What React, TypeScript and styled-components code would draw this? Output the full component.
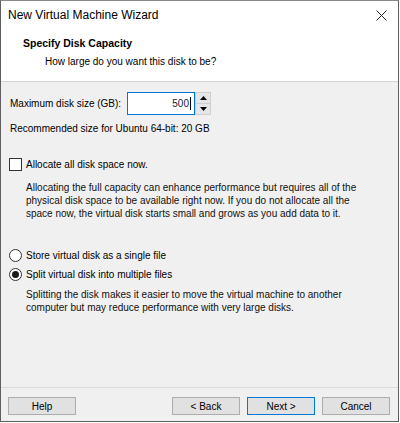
import React from "react";
import styled, { createGlobalStyle } from "styled-components";

const Global = createGlobalStyle`
  html, body { margin: 0; padding: 0; background: #ffffff; }
  body { font-family: "Liberation Sans", Arial, sans-serif; }
`;

const Window = styled.div`
  width: 399px;
  height: 422px;
  box-sizing: border-box;
  border: 1px solid #5f5f5f;
  border-top-color: #8a8a8a;
  display: flex;
  flex-direction: column;
  background: #f0f0f0;
  color: #000;
  font-size: 10px;
  line-height: 13px;
`;

const TitleBar = styled.div`
  height: 29px;
  background: #fff;
  display: flex;
  align-items: center;
  justify-content: space-between;
  padding-left: 7px;
  padding-right: 11px;
`;

const TitleText = styled.span`
  font-size: 12px;
  color: #000;
`;

const Header = styled.div`
  background: #fff;
  padding: 7px 0 13px 0;
  border-bottom: 1px solid #d4d4d4;
  display: flex;
  flex-direction: column;
  gap: 5px;
`;

const HeaderTitle = styled.div`
  font-weight: bold;
  font-size: 10.5px;
  padding-left: 22px;
`;

const HeaderSub = styled.div`
  padding-left: 44px;
`;

const Body = styled.div`
  flex: 1;
  padding: 10px 8px 0 8px;
  display: flex;
  flex-direction: column;
`;

const SizeRow = styled.div`
  display: flex;
  align-items: center;
  height: 23px;
`;

const SizeLabel = styled.span`
  width: 117px;
  padding-left: 1px;
`;

const Input = styled.div`
  width: 63px;
  height: 21px;
  border: 1px solid #0078d7;
  background: #fff;
  display: flex;
  align-items: center;
  justify-content: flex-end;
  padding-right: 3px;
  box-sizing: content-box;
  color: #1a1a3a;
`;

const Caret = styled.span`
  display: inline-block;
  width: 1px;
  height: 13px;
  background: #000;
  margin-left: 1px;
`;

const Spinner = styled.div`
  width: 16px;
  height: 23px;
  margin-left: 0;
  display: flex;
  flex-direction: column;
  border: 1px solid #cfcfcf;
  box-sizing: border-box;
  background: #f0f0f0;
`;

const SpinHalf = styled.div<{ $top?: boolean }>`
  flex: 1;
  display: flex;
  align-items: center;
  justify-content: center;
  background: #e6e6e6;
  border-bottom: ${(p) => (p.$top ? "1px solid #cfcfcf" : "none")};
`;

const Note = styled.div`
  margin-top: 7px;
  padding-left: 1px;
`;

const CheckRow = styled.label`
  display: flex;
  align-items: center;
  gap: 4px;
  margin-top: 22px;
  height: 14px;
`;

const Box = styled.span`
  width: 13px;
  height: 13px;
  box-sizing: border-box;
  border: 1px solid #333;
  background: #fff;
`;

const Para = styled.p<{ $mt: number }>`
  margin: ${(p) => p.$mt}px 0 0 17px;
  color: #111;
`;

const RadioGroup = styled.div`
  margin-top: 29px;
  display: flex;
  flex-direction: column;
  gap: 6px;
`;

const RadioRow = styled.label`
  display: flex;
  align-items: center;
  gap: 4px;
  height: 13px;
`;

const Circle = styled.span<{ $checked?: boolean }>`
  width: 13px;
  height: 13px;
  box-sizing: border-box;
  border-radius: 50%;
  border: 1px solid #333;
  background: #fff;
  display: flex;
  align-items: center;
  justify-content: center;
  &::after {
    content: "";
    display: ${(p) => (p.$checked ? "block" : "none")};
    width: 7px;
    height: 7px;
    border-radius: 50%;
    background: #1a1a1a;
  }
`;

const Footer = styled.div`
  border-top: 1px solid #dadada;
  height: 34px;
  display: flex;
  align-items: flex-start;
  padding: 9px 8px 0 7px;
  box-sizing: border-box;
  gap: 7px;
`;

const Button = styled.button<{ $primary?: boolean }>`
  width: 68px;
  height: 18px;
  padding: 0;
  font-family: "Liberation Sans", Arial, sans-serif;
  font-size: 10px;
  color: #000;
  background: #e1e1e1;
  border: 1px solid ${(p) => (p.$primary ? "#0078d7" : "#adadad")};
  box-sizing: border-box;
`;

const Spacer = styled.div`
  flex: 1;
`;

export default function App() {
  return (
    <>
      <Global />
      <Window>
        <TitleBar>
          <TitleText>New Virtual Machine Wizard</TitleText>
          <svg width="11" height="11" viewBox="0 0 11 11">
            <path d="M0.5 0.5 L10.5 10.5 M10.5 0.5 L0.5 10.5" stroke="#222" strokeWidth="1" />
          </svg>
        </TitleBar>
        <Header>
          <HeaderTitle>Specify Disk Capacity</HeaderTitle>
          <HeaderSub>How large do you want this disk to be?</HeaderSub>
        </Header>
        <Body>
          <SizeRow>
            <SizeLabel>Maximum disk size (GB):</SizeLabel>
            <Input>
              500
              <Caret />
            </Input>
            <Spinner>
              <SpinHalf $top>
                <svg width="7" height="4" viewBox="0 0 7 4">
                  <path d="M0 4 L3.5 0 L7 4 Z" fill="#000" />
                </svg>
              </SpinHalf>
              <SpinHalf>
                <svg width="7" height="4" viewBox="0 0 7 4">
                  <path d="M0 0 L3.5 4 L7 0 Z" fill="#000" />
                </svg>
              </SpinHalf>
            </Spinner>
          </SizeRow>
          <Note>Recommended size for Ubuntu 64-bit: 20 GB</Note>
          <CheckRow>
            <Box />
            <span>Allocate all disk space now.</span>
          </CheckRow>
          <Para $mt={10}>
            Allocating the full capacity can enhance performance but requires all of the
            <br />
            physical disk space to be available right now. If you do not allocate all the
            <br />
            space now, the virtual disk starts small and grows as you add data to it.
          </Para>
          <RadioGroup>
            <RadioRow>
              <Circle />
              <span>Store virtual disk as a single file</span>
            </RadioRow>
            <RadioRow>
              <Circle $checked />
              <span>Split virtual disk into multiple files</span>
            </RadioRow>
          </RadioGroup>
          <Para $mt={7}>
            Splitting the disk makes it easier to move the virtual machine to another
            <br />
            computer but may reduce performance with very large disks.
          </Para>
        </Body>
        <Footer>
          <Button>Help</Button>
          <Spacer />
          <Button>&lt; Back</Button>
          <Button $primary>Next &gt;</Button>
          <Button>Cancel</Button>
        </Footer>
      </Window>
    </>
  );
}
